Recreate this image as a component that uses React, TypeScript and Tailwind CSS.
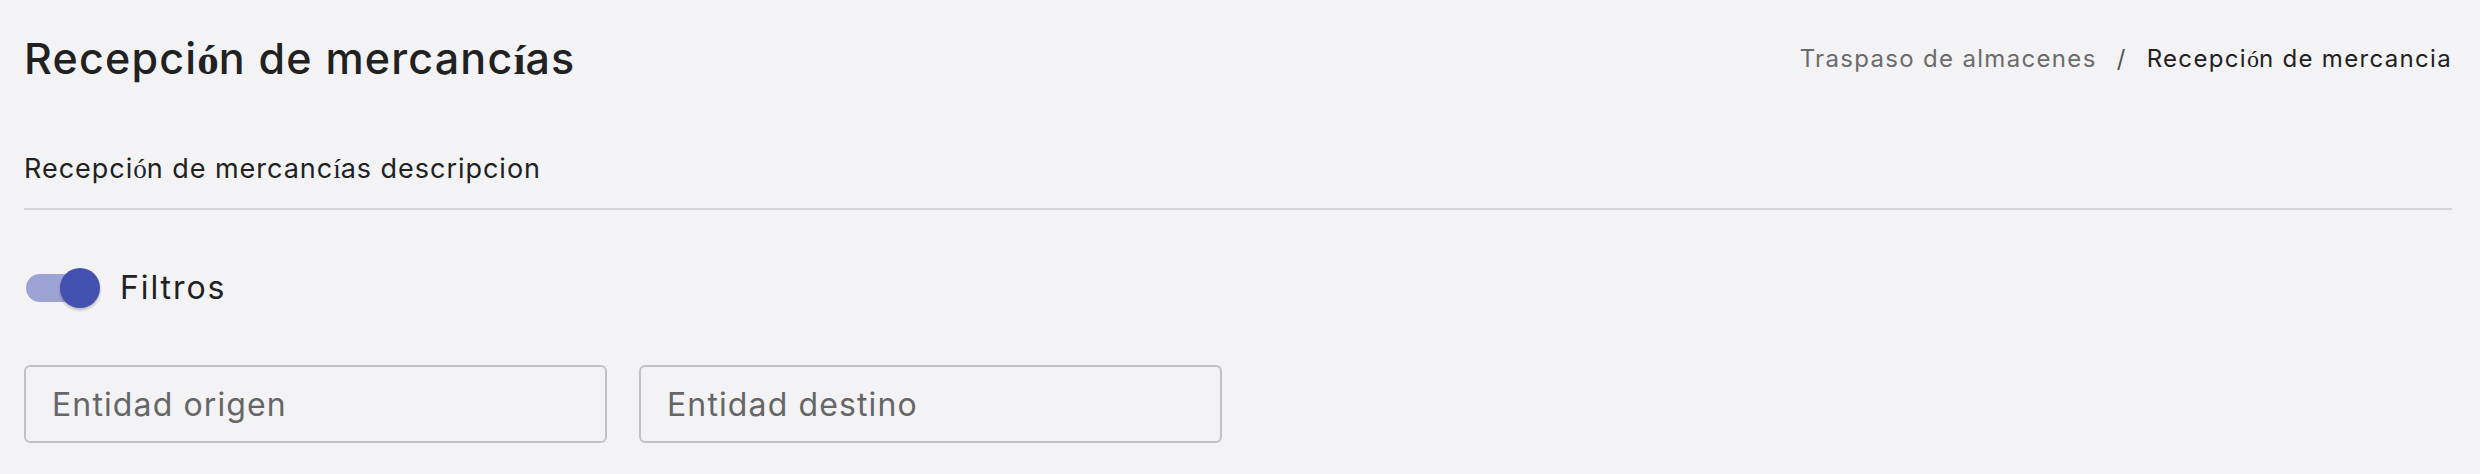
import { useState } from "react";

// glyphs the app font lacks fall back to a serif face in the original
function Fb({ c, bold }: { c: string; bold?: boolean }) {
    return (
        <span className={`font-['Liberation_Serif',serif] tracking-normal ${bold ? "font-bold" : "font-normal"}`}>
            {c}
        </span>
    );
}

const fields = ["Entidad origen", "Entidad destino"];

export default function App() {
    const [filtros, setFiltros] = useState(true);

    return (
        <div className="min-h-[474px] bg-[#f3f3f5] pl-6 pr-7 font-['Inter',sans-serif] text-[#212121]">
            {/* Header */}
            <div className="flex items-center justify-between pt-8">
                <h1 className="text-[43px] leading-[52px] font-medium tracking-[0.028em]">
                    Recepci<Fb c="ó" bold />n de mercanc<Fb c="í" bold />as
                </h1>
                <nav className="flex items-center gap-5 text-[24px] leading-[30px] tracking-[0.055em]">
                    <span className="text-[#6b6b6b]">Traspaso de almacenes</span>
                    <span className="text-[#555]">/</span>
                    <span className="text-[#212121]">
                        Recepci<Fb c="ó" />n de mercancia
                    </span>
                </nav>
            </div>

            {/* Description */}
            <p className="mt-[65px] text-[27px] leading-[36px] tracking-[0.036em]">
                Recepci<Fb c="ó" />n de mercanc<Fb c="í" />as descripcion
            </p>
            <div className="mt-[21px] h-[2px] bg-[#d5d5d8]" />

            {/* Filters toggle */}
            <div className="mt-[58px] flex items-center gap-[18px]">
                <button
                    type="button"
                    onClick={() => setFiltros(!filtros)}
                    className="relative h-10 w-[78px] shrink-0"
                >
                    <span
                        className={`absolute left-0.5 top-1.5 h-7 w-[70px] rounded-full ${filtros ? "bg-[#9da3d4]" : "bg-[#bdbdbd]"}`}
                    />
                    <span
                        className={`absolute top-0 h-10 w-10 rounded-full shadow-[0_2px_3px_rgba(0,0,0,0.25)] ${filtros ? "left-9 bg-[#4350af]" : "left-0 bg-white"}`}
                    />
                </button>
                <span className="text-[32px] leading-10 tracking-[0.06em]">Filtros</span>
            </div>

            {/* Filter fields */}
            <div className="mt-[57px] grid grid-cols-4 gap-8">
                {fields.map((f) => (
                    <input
                        key={f}
                        placeholder={f}
                        className="h-[78px] rounded-md border-2 border-[#c2c2c4] bg-transparent px-[26px] text-[32px] tracking-[0.035em] text-[#212121] outline-none placeholder:text-[#666]"
                    />
                ))}
            </div>
        </div>
    );
}
